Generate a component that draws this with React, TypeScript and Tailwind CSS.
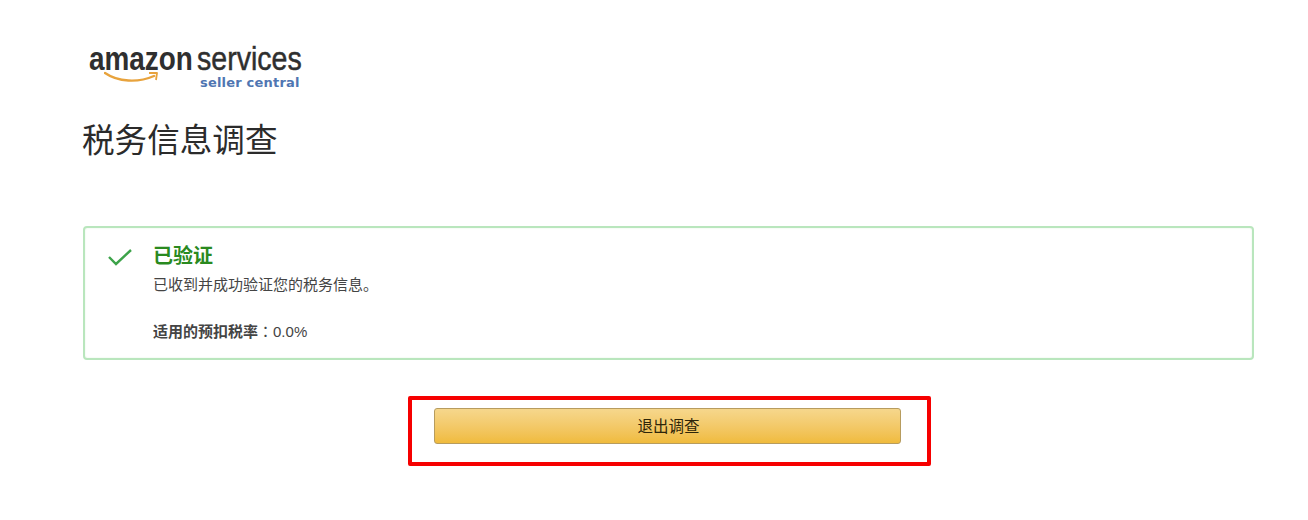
const CJK = "font-['Liberation_Sans','Noto_Sans_CJK_SC',sans-serif]"

/** Amazon Services seller central wordmark. */
function Logo() {
  return (
    <div className="relative h-[46px] w-[220px] font-['Liberation_Sans',sans-serif] text-[#2f2f2f]">
      <span className="absolute left-[6px] top-[-4px] origin-left scale-x-[0.82] text-[34px] leading-[40px] font-bold">amazon</span>
      <span className="absolute left-[114px] top-[-4px] origin-left scale-x-[0.84] text-[34px] leading-[40px] [-webkit-text-stroke:0.5px_#2f2f2f]">services</span>
      {/* smile arrow sits under the word */}
      <svg className="absolute left-[21px] top-[29px]" width="56" height="14" viewBox="0 0 56 14" fill="none">
        <path d="M1 2 C14 11 34 12 50 5" stroke="#e8a33d" strokeWidth="2.4" strokeLinecap="round" />
        <path d="M45 2 L53 2 L52 9" stroke="#e8a33d" strokeWidth="1.8" strokeLinejoin="round" />
      </svg>
      <div className="absolute left-[117px] top-[33px] font-['DejaVu_Sans',sans-serif] text-[13px] leading-[16px] font-bold tracking-[0.2px] text-[#4f76b2]">
        seller central
      </div>
    </div>
  )
}

export default function App() {
  return (
    <div className={`h-[520px] w-[1308px] overflow-hidden bg-white pl-[83px] pr-[54px] pt-[42px] ${CJK}`}>
      <Logo />

      <h1 className="-ml-[1px] mt-[31px] text-[32.6px] leading-[44px] font-normal text-[#2b2b2b]">税务信息调查</h1>

      <div className="mt-[63px] flex h-[134px] rounded-[4px] border-2 border-[#b9e6bd] pl-[22px] pt-[17px] shadow-[inset_0_0_2px_#dff3e0]">
        <svg className="mt-[2px] shrink-0" width="26" height="20" viewBox="0 0 26 20" fill="none">
          <path d="M2 10 L9 17 L24 3" stroke="#3da34a" strokeWidth="2.4" />
        </svg>
        <div className="ml-[20px]">
          <div className="text-[20px] leading-[22px] font-bold text-[#2a8a1f]">已验证</div>
          <div className="mt-[9px] text-[15px] leading-[18px] text-[#444]">已收到并成功验证您的税务信息。</div>
          <div className="mt-[28px] text-[15px] leading-[18px] text-[#444]">
            <span className="font-bold">适用的预扣税率</span>
            <span className="font-['Noto_Sans_CJK_TC',sans-serif]">：</span>0.0%
          </div>
        </div>
      </div>

      <div className="mt-[36px] flex justify-center pl-[2px]">
        <div className="h-[70px] w-[523px] rounded-[2px] border-4 border-[#f60000] pl-[22px] pt-[8px]">
          <button className="flex h-[36px] w-[467px] items-center justify-center rounded-[3px] border border-[#b79c5e] bg-gradient-to-b from-[#f6d78c] to-[#f0bb3c] pl-[2px] pt-[1px] text-[15.5px] text-[#2e2509]">
            退出调查
          </button>
        </div>
      </div>
    </div>
  )
}
